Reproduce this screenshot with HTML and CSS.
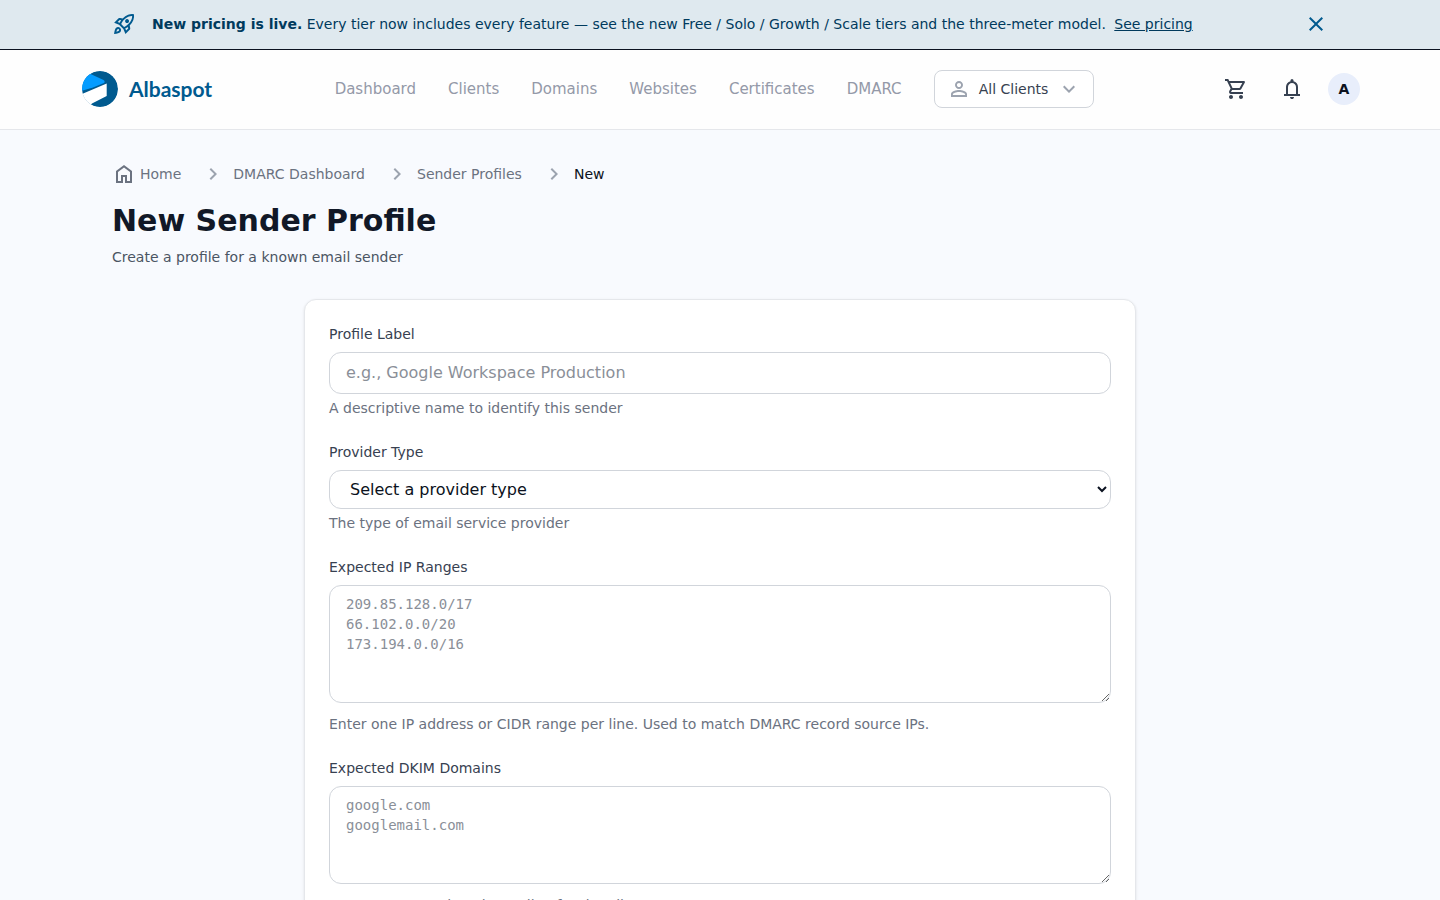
FILE: index.html
```html
<!DOCTYPE html>
<html lang="en">
<head>
<meta charset="utf-8">
<title>New Sender Profile</title>
<link rel="stylesheet" href="styles.css">
</head>
<body>
<div class="banner">
  <div class="banner-inner">
    <svg class="icon banner-icon" viewBox="0 -960 960 960"><path d="m226-559 78 33q14-28 29-54t33-52l-56-11-84 84Zm142 83 114 113q42-16 90-49t90-75q70-70 109.500-155.500T806-800q-72-5-158 34.500T492-656q-42 42-75 90t-49 90Zm178-65q-23-23-23-56.500t23-56.500q23-23 57-23t57 23q23 23 23 56.500T660-541q-23 23-57 23t-57-23Zm19 321 84-84-11-56q-26 18-52 32.500T532-299l33 79Zm313-653q19 121-23.500 235.500T708-419l20 99q4 20-2 39t-20 33L538-80l-84-197-171-171-197-84 167-168q14-14 33.500-20t39.500-2l99 20q104-104 218-147t235-24ZM157-321q35-35 85.500-35.500T328-322q35 35 34.500 85.500T327-151q-25 25-83.500 43T82-76q14-103 32-161.500t43-83.500Zm57 56q-10 10-20 36.500T180-175q27-4 53.500-13.500T270-208q12-12 13-29t-11-29q-12-12-29-11.500T214-265Z"/></svg>
    <p class="banner-text"><strong>New pricing is live.</strong> Every tier now includes every feature — see the new Free / Solo / Growth / Scale tiers and the three-meter model. <a class="banner-link" href="#">See pricing</a></p>
    <button class="icon-button banner-close" type="button" aria-label="Dismiss"><svg class="icon" viewBox="0 0 24 24"><path d="M19 6.410 17.590 5 12 10.590 6.410 5 5 6.410 10.590 12 5 17.590 6.410 19 12 13.410 17.590 19 19 17.590 13.410 12z"/></svg></button>
  </div>
</div>
<header class="header">
  <div class="header-inner">
    <a class="logo" href="#">
      <svg class="logo-mark" viewBox="0 0 36 36"><circle cx="18" cy="18" r="18" fill="#005a8f"/><path d="M-1 23.500 24.700 12.500V25L10 32.500 6 37H-2z" fill="#fff"/><path d="M7.500 2.500 21.500 9Q23.500 10.500 22 12L11 16.500-1 20V2z" fill="#059cff"/></svg>
      <span>Albaspot</span>
    </a>
    <nav class="nav">
      <a href="#">Dashboard</a><a href="#">Clients</a><a href="#">Domains</a><a href="#">Websites</a><a href="#">Certificates</a><a href="#">DMARC</a>
      <button class="client-button" type="button">
        <svg class="icon client-icon" viewBox="0 0 24 24"><path d="M12 5.900c1.160 0 2.100.940 2.100 2.100s-.940 2.100-2.100 2.100S9.900 9.160 9.900 8s.940-2.100 2.100-2.100m0 9c2.970 0 6.100 1.460 6.100 2.100v1.100H5.900V17c0-.640 3.130-2.100 6.100-2.100M12 4C9.790 4 8 5.790 8 8s1.790 4 4 4 4-1.790 4-4-1.790-4-4-4m0 9c-2.670 0-8 1.340-8 4v3h16v-3c0-2.660-5.330-4-8-4"/></svg>
        <span>All Clients</span>
        <svg class="icon client-icon" viewBox="0 0 24 24"><path d="M16.590 8.590 12 13.170 7.410 8.590 6 10l6 6 6-6z"/></svg>
      </button>
    </nav>
    <div class="actions">
      <button class="icon-button" type="button" aria-label="Cart"><svg class="icon" viewBox="0 0 24 24"><path d="M15.550 13c.750 0 1.410-.410 1.750-1.030l3.580-6.490c.370-.660-.110-1.480-.870-1.480H5.210l-.940-2H1v2h2l3.600 7.590-1.350 2.440C4.520 15.370 5.480 17 7 17h12v-2H7l1.100-2zM6.160 6h12.150l-2.760 5H8.530zM7 18c-1.100 0-1.990.900-1.990 2S5.900 22 7 22s2-.900 2-2-.900-2-2-2m10 0c-1.100 0-1.990.900-1.990 2s.890 2 1.990 2 2-.900 2-2-.900-2-2-2"/></svg></button>
      <button class="icon-button" type="button" aria-label="Notifications"><svg class="icon" viewBox="0 -960 960 960"><path d="M160-200v-80h80v-280q0-83 50-147.500T420-792v-28q0-25 17.500-42.500T480-880q25 0 42.500 17.500T540-820v28q80 20 130 84.500T720-560v280h80v80H160Zm320-300Zm0 420q-33 0-56.500-23.500T400-160h160q0 33-23.500 56.500T480-80ZM320-280h320v-280q0-66-47-113t-113-47q-66 0-113 47t-47 113v280Z"/></svg></button>
      <button class="avatar" type="button">A</button>
    </div>
  </div>
</header>
<main class="page">
  <nav class="breadcrumb" aria-label="Breadcrumb">
    <a class="home" href="#"><svg class="icon" viewBox="0 -960 960 960"><path d="M240-200h120v-240h240v240h120v-360L480-740 240-560v360Zm-80 80v-480l320-240 320 240v480H520v-240h-80v240H160Z"/></svg>Home</a>
    <svg class="icon separator" viewBox="0 0 24 24"><path d="M10 6 8.590 7.410 13.170 12l-4.580 4.590L10 18l6-6z"/></svg>
    <a href="#">DMARC Dashboard</a>
    <svg class="icon separator" viewBox="0 0 24 24"><path d="M10 6 8.590 7.410 13.170 12l-4.580 4.590L10 18l6-6z"/></svg>
    <a href="#">Sender Profiles</a>
    <svg class="icon separator" viewBox="0 0 24 24"><path d="M10 6 8.590 7.410 13.170 12l-4.580 4.590L10 18l6-6z"/></svg>
    <span class="current">New</span>
  </nav>
  <h1 class="title">New Sender Profile</h1>
  <p class="subtitle">Create a profile for a known email sender</p>
  <form class="card">
    <div class="field">
      <label for="label">Profile Label</label>
      <input class="control" id="label" type="text" placeholder="e.g., Google Workspace Production">
      <p class="help">A descriptive name to identify this sender</p>
    </div>
    <div class="field">
      <label for="provider">Provider Type</label>
      <select class="control" id="provider"><option>Select a provider type</option></select>
      <p class="help">The type of email service provider</p>
    </div>
    <div class="field">
      <label for="ips">Expected IP Ranges</label>
      <textarea class="control code" id="ips" rows="5" placeholder="209.85.128.0/17
66.102.0.0/20
173.194.0.0/16"></textarea>
      <p class="help">Enter one IP address or CIDR range per line. Used to match DMARC record source IPs.</p>
    </div>
    <div class="field">
      <label for="dkim">Expected DKIM Domains</label>
      <textarea class="control code" id="dkim" rows="4" placeholder="google.com
googlemail.com"></textarea>
      <p class="help">Enter one DKIM domain per line for the alignment.</p>
    </div>
  </form>
</main>
</body>
</html>
```

FILE: styles.css
```css
* { box-sizing: border-box; }
body { margin: 0; background: #f8fafe; color: #0b1220; font: 16px/24px "DejaVu Sans", sans-serif; }
p, h1 { margin: 0; }
a { color: inherit; text-decoration: none; }
button { font: inherit; color: inherit; cursor: pointer; }
.icon { width: 24px; height: 24px; fill: currentColor; flex: none; display: block; }
.icon-button { border: 0; background: none; padding: 8px; }

.banner { background: #dfe9ef; border-bottom: 1px solid #0b1220; color: #003a5d; }
.banner-inner { max-width: 1280px; margin: 0 auto; padding: 4px 24px 5px 32px; display: flex; align-items: center; gap: 16px; }
.banner-icon { color: #005a8f; }
.banner-text { flex: 1; font-size: 14px; line-height: 20px; }
.banner-link { margin-left: 4px; text-decoration: underline; }
.banner-close { color: #005a8f; }

.header { background: #fefefe; border-bottom: 1px solid #e5e7eb; }
.header-inner { max-width: 1280px; min-height: 79px; margin: 0 auto; padding-bottom: 1px; display: flex; align-items: center; justify-content: space-between; }
.logo { display: flex; align-items: center; gap: 11px; padding-left: 2px; color: #005a8f; font: bold 21px/28px Lato, sans-serif; }
.logo-mark { width: 36px; height: 36px; border-radius: 50%; }
.nav { display: flex; align-items: center; gap: 32px; color: #9499a8; font-size: 15px; }
.client-button { display: flex; align-items: center; justify-content: space-between; width: 160px; height: 38px; padding: 0 12px; background: #fff; border: 1px solid #d1d5db; border-radius: 8px; color: #374151; font-size: 14px; }
.client-icon { color: #9ca3af; }
.actions { display: flex; align-items: center; gap: 16px; color: #374151; }
.avatar { width: 32px; height: 32px; padding: 0; border: 0; border-radius: 50%; background: #e8eefb; color: #0b1220; font: bold 14px/20px "DejaVu Sans", sans-serif; }

.page { max-width: 1280px; margin: 0 auto; padding: 32px; }
.breadcrumb { display: flex; align-items: center; color: #6b7280; font-size: 14px; line-height: 24px; }
.home { display: flex; gap: 4px; }
.separator { margin: 0 8px 0 20px; color: #9ca3af; }
.current { color: #0b1220; }
.title { margin-top: 17px; color: #111827; font-size: 30px; line-height: 36px; }
.subtitle { margin-top: 8px; color: #4b5563; font-size: 14px; line-height: 20px; }
.card { max-width: 832px; margin: 32px auto 0; padding: 24px; background: #fff; border: 1px solid #e5e7eb; border-radius: 12px; box-shadow: 0 1px 3px #0000001a; }
.field { margin-bottom: 24px; }
.field label { display: block; margin-bottom: 8px; color: #374151; font-size: 14px; line-height: 20px; }
.control { width: 100%; padding: 8px 16px; background: #fff; border: 1px solid #d1d5db; border-radius: 12px; color: #0b1220; font: 16px/24px "DejaVu Sans", sans-serif; }
.control::placeholder { color: #8a8f98; }
select.control { height: 39px; }
textarea.control { resize: vertical; }
.control.code { font: 14px/20px "DejaVu Sans Mono", monospace; }
.help { margin-top: 4px; color: #6b7280; font-size: 14px; line-height: 20px; }
```
